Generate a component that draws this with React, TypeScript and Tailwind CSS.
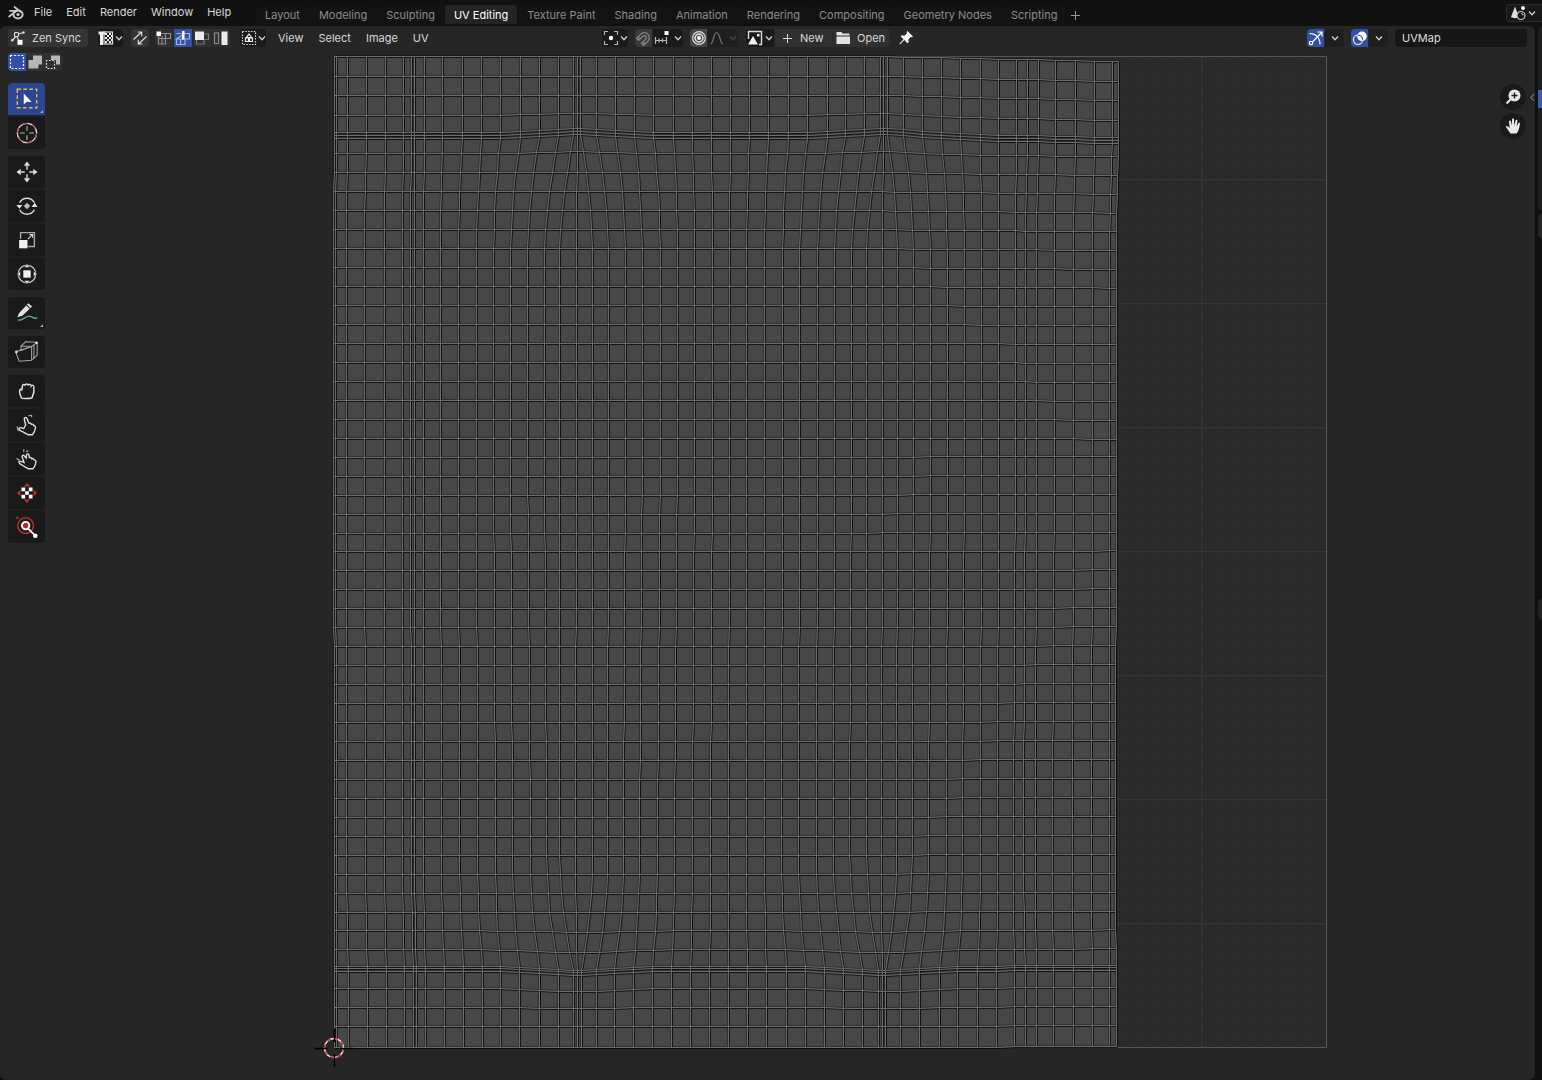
import React from "react";

/* ---------- UV mesh geometry ---------- */

// One entry per vertical edge loop: x at the top strip, upper body, lower body, bottom strip.
const COLUMNS: number[][] = [
  [335, 334, 335, 335], [337, 336, 337, 337], [348, 347, 347, 349], [367, 365, 366, 368], [386, 385, 385, 387],
  [404, 403, 403, 405], [412, 411, 412, 414], [415, 415, 415, 417], [425, 424, 424, 426], [443, 441, 442, 445],
  [463, 459, 460, 464], [482, 477, 478, 483], [501, 494, 496, 501], [521, 511, 513, 520], [540, 528, 531, 540],
  [559, 545, 547, 559], [574, 560, 560, 574], [578, 577, 576, 578], [581, 593, 593, 582], [597, 609, 608, 597],
  [616, 626, 624, 615], [635, 643, 640, 634], [654, 661, 658, 653], [674, 678, 675, 672], [693, 695, 693, 691],
  [712, 713, 711, 710], [731, 730, 729, 729], [750, 747, 747, 748], [769, 765, 765, 767], [789, 783, 782, 787],
  [808, 800, 799, 806], [828, 818, 817, 825], [846, 835, 834, 844], [865, 852, 850, 863], [881, 867, 867, 879],
  [884, 883, 882, 883], [888, 898, 897, 886], [904, 914, 913, 901], [923, 931, 929, 920], [942, 948, 947, 940],
  [961, 965, 963, 958], [981, 982, 981, 978], [999, 999, 998, 997], [1017, 1016, 1014, 1015], [1028, 1026, 1024, 1026],
  [1039, 1037, 1036, 1037], [1056, 1055, 1053, 1054], [1076, 1074, 1073, 1074], [1095, 1093, 1092, 1093],
  [1113, 1110, 1110, 1110], [1119, 1117, 1116, 1117],
];

const BODY_ROWS = Array.from({ length: 43 }, (_, i) => 154.500 + i * 18.95);
const ROWS = [57, 77, 96, 116, 133, 136, 139, ...BODY_ROWS, 967, 969, 972, 989, 1008, 1027, 1048];

const mix = (a: number, b: number, t: number) => a + (b - a) * Math.max(0, Math.min(1, t));
const ease = (t: number) => {
  const c = Math.max(0, Math.min(1, t));
  return 1 - Math.pow(1 - c, 2.2);
};

function columnX(c: number[], y: number) {
  if (y <= 139) return c[0];
  if (y >= 966) return c[3];
  if (y < 290) return mix(c[0], c[1], ease((y - 139) / 140));
  if (y > 830) return mix(c[3], c[2], ease((966 - y) / 120));
  return mix(c[1], c[2], (y - 450) / 380);
}

function rowY(y: number, x: number) {
  const near = Math.exp(-Math.pow((x - 578) / 50, 2)) + Math.exp(-Math.pow((x - 884) / 50, 2));
  const up = y < 60 ? 0 : 4 * Math.exp(-Math.pow((y - 136) / 26, 2));
  const down = y > 1040 ? 0 : 4 * Math.exp(-Math.pow((y - 969) / 36, 2));
  const slope = (x - 880) / 235;
  const tilt = y < 450 ? mix(0, y < 145 ? 5 : 3, slope) * mix(1, 0.3, (y - 140) / 200) : mix(0, -1, slope);
  return y + near * (down - up) + tilt;
}

const snap = (n: number) => Math.round(n) - 0.5;
const point = (c: number[], y: number) => snap(columnX(c, y)) + " " + snap(rowY(y, columnX(c, y)));
const MESH_PATH = [
  ...COLUMNS.map((c) => "M" + ROWS.map((y) => point(c, y)).join("L")),
  ...ROWS.map((y) => "M" + COLUMNS.map((c) => point(c, y)).join("L")),
].join("");
const FIRST = COLUMNS[0];
const LAST = COLUMNS[COLUMNS.length - 1];
const TOP_EDGE = COLUMNS.map((c) => point(c, 57)).join("L");
const FILL_PATH =
  "M" + TOP_EDGE + "L" + ROWS.map((y) => point(LAST, y)).join("L") + "L" +
  [...ROWS].reverse().map((y) => point(FIRST, y)).join("L") + "Z";

function UvCanvas() {
  const minor = Array.from({ length: 63 }, (_, i) => i + 1);
  const major = [1, 2, 3, 4, 5, 6, 7];
  return (
    <svg className="absolute inset-0 h-full w-full" aria-label="UV layout">
      <g transform="translate(0 -26)">
        <rect x="334" y="56" width="992" height="992" fill="#2a2a2a" />
        <g stroke="#2d2d2d">
          {minor.map((i) => (
            <path key={i} d={`M${334 + Math.round(i * 15.5)}.5 56V1048M334 ${56 + Math.round(i * 15.5)}.5H1326`} />
          ))}
        </g>
        <g stroke="#363636">
          {major.map((i) => (
            <path key={i} d={`M${333 + i * 124}.5 56V1048M334 ${55 + i * 124}.5H1326`} />
          ))}
        </g>
        <rect x="334.5" y="56.5" width="992" height="991" fill="none" stroke="#565656" />
        <path d={FILL_PATH} fill="#474747" />
        <path d={MESH_PATH} fill="none" stroke="#000" strokeOpacity=".3" strokeWidth="3" />
        <path d={MESH_PATH} fill="none" stroke="#000" strokeOpacity=".6" strokeWidth="1" transform="translate(1 1)" />
        <path d={MESH_PATH} fill="none" stroke="#6c6c6c" strokeWidth="1" />
        <circle cx="334" cy="1048" r="9.5" fill="none" stroke="#f4f4f4" strokeWidth="1.4" />
        <circle cx="334" cy="1048" r="9.5" fill="none" stroke="#e8202c" strokeWidth="1.4" strokeDasharray="3.73" />
        <path d="M314.500 1048.500h13M340 1048.500h13M334.500 1029v13M334.500 1054v13" stroke="#000" strokeWidth="1.3" />
      </g>
    </svg>
  );
}

/* ---------- Icons ---------- */

type IconProps = { children: React.ReactNode; w?: string; box?: string };
const Icon = ({ children, w = "h-4 w-4", box = "0 0 16 16" }: IconProps) => (
  <svg viewBox={box} className={`${w} shrink-0`} fill="none" stroke="#dcdcdc" strokeWidth="1.2" aria-hidden="true">
    {children}
  </svg>
);
const Chevron = ({ dim = false }: { dim?: boolean }) => (
  <svg viewBox="0 0 8 8" className="h-2 w-2 shrink-0" fill="none" stroke={dim ? "#444" : "#cfcfcf"} strokeWidth="1.3" aria-hidden="true">
    <path d="M1 2.500 4 5.700 7 2.500" />
  </svg>
);

const BlenderLogo = () => (
  <Icon>
    <path d="M1.200 11.500 8 6.200M2 5.800h7M6.500 2 13 7" stroke="#c8c8c8" strokeWidth="1.800" strokeLinecap="round" />
    <ellipse cx="10" cy="9.500" rx="4.600" ry="4" stroke="#c8c8c8" strokeWidth="2" />
    <circle cx="10" cy="9.500" r="1.600" fill="#c8c8c8" stroke="none" />
  </Icon>
);
const ZenSyncIcon = () => (
  <Icon>
    <path d="M2 10.500 5.500 7M8.500 4 13.500 2.500M6.700 6.500 8.500 10" />
    <rect x="4.500" y="2.500" width="4" height="4" rx="1" />
    <rect x="7.500" y="9.800" width="5" height="5" fill="#fff" stroke="none" />
    <circle cx="2.300" cy="10.300" r="1.300" fill="#dcdcdc" stroke="none" />
    <circle cx="13.500" cy="2.500" r="1.200" fill="#dcdcdc" stroke="none" />
  </Icon>
);
const CheckerIcon = () => (
  <Icon>
    <path d="M0.500 1.500h6.500v3H5v10.500H2V4.500H.5z" fill="#f0f0f0" stroke="none" />
    <rect x="6" y="2" width="8.500" height="12" stroke="#ddd" />
    <path d="M7 3h2v2H7zM11 3h2v2h-2zM9 5h2v2H9zM13 5h1v2h-1zM7 7h2v2H7zM11 7h2v2h-2zM9 9h2v2H9zM13 9h1v2h-1zM7 11h2v2H7zM11 11h2v2h-2z" fill="#f0f0f0" stroke="none" />
  </Icon>
);
const SyncIcon = () => (
  <Icon>
    <path d="M1.500 9.500 9.500 2M5.500 2h4.200v4.200M14.500 6.500 6.500 14M10.500 14H6.300V9.800" />
  </Icon>
);
const VertIcon = () => (
  <Icon>
    <path d="M5 3.500h9.500v5H2.500V5M2.500 8.500v5.500h7V3.500M6 6v8" stroke="#8c8c8c" />
    <rect x="0.500" y="1.500" width="4.500" height="4.500" fill="#fff" stroke="none" />
  </Icon>
);
const EdgeIcon = () => (
  <Icon>
    <path d="M1.500 3.500h5M9.500 3.500h5v5.500h-13zM1.500 9v5.500h8.500V9M5.500 9v5.500" stroke="#9fb4ea" />
    <rect x="7" y="1" width="2.500" height="8.500" fill="#fff" stroke="none" />
  </Icon>
);
const FaceIcon = () => (
  <Icon>
    <path d="M10 4h4.500v5.500H2.500V14H10V9.500" stroke="#777" />
    <rect x="1" y="1.500" width="9" height="8.500" fill="#ececec" stroke="none" />
  </Icon>
);
const IslandIcon = () => (
  <Icon>
    <rect x="1.500" y="3" width="4" height="10.500" stroke="#888" />
    <rect x="8.500" y="1.500" width="6" height="13.500" fill="#ececec" stroke="none" />
  </Icon>
);
const StickyIcon = () => (
  <Icon>
    <rect x="1.500" y="1.500" width="13" height="13" strokeDasharray="1.500 1.300" />
    <path d="M8 4 10.500 7.500H5.500zM4.500 8h3v3.500h-3zM8.500 8h3v3.500h-3z" stroke="#eee" />
  </Icon>
);
const PivotIcon = () => (
  <Icon>
    <path d="M1.500 5V1.500H5M11 1.500h3.500V5M14.500 11v3.500H11M5 14.500H1.500V11" stroke="#b4b4b4" />
    <circle cx="8" cy="8" r="2.200" fill="#fff" stroke="none" />
  </Icon>
);
const MagnetIcon = () => (
  <Icon>
    <g transform="rotate(45 8 8)" stroke="#8a8a8a">
      <path d="M3 13.500V7.500a5 5 0 0 1 10 0v6H10V7.500a2 2 0 0 0-4 0v6zM3 11.500h3M10 11.500h3" />
    </g>
  </Icon>
);
const IncrementIcon = () => (
  <Icon>
    <path d="M1.500 7v7M5 8.500v4M8.500 8.500v4M12.500 7v7M1.500 10.500h11" stroke="#b8b8b8" />
    <rect x="10.500" y="1" width="4" height="4" fill="#fff" stroke="none" />
  </Icon>
);
const ProportionalIcon = () => (
  <Icon>
    <circle cx="8" cy="8" r="6.300" />
    <circle cx="8" cy="8" r="3.900" strokeWidth="1.600" />
    <circle cx="8" cy="8" r="2" fill="#fff" stroke="none" />
  </Icon>
);
const FalloffIcon = () => (
  <Icon>
    <path d="M1.500 14c3 0 3-11.500 6.200-11.500S11 14 14 14" stroke="#777" />
  </Icon>
);
const ImageIcon = () => (
  <Icon>
    <path d="M1.500 9V1.500h13v13H12" strokeWidth="1.400" />
    <path d="M1 14.500 6 6l5 8.500zM10 4h2.500v2.500H10z" fill="#eee" stroke="none" />
  </Icon>
);
const PlusIcon = ({ dim = false }: { dim?: boolean }) => (
  <svg viewBox="0 0 10 10" className="h-[10px] w-[10px] shrink-0" stroke={dim ? "#999" : "#ddd"} aria-hidden="true">
    <path d="M5.500 1v9M1 5.500h9" />
  </svg>
);
const FolderIcon = () => (
  <Icon>
    <path d="M1.500 2h5l1 1.500h7V5.500h-13zM1.500 6.500h13.500V14H1.500z" fill="#e2e2e2" stroke="none" />
  </Icon>
);
const PinIcon = () => (
  <Icon>
    <path d="M9.500 1 15 6.500l-1 .8-1.300-.3-2.400 2.500.4 2.700-1.200 1L6.300 10 2 14.500 1.300 14l4.200-4.800L2.700 6.500l1-1.200 2.800.4L9 3.300l-.4-1.400z" fill="#fff" stroke="none" />
  </Icon>
);
const GizmoIcon = () => (
  <Icon>
    <path d="M1.500 3.500C8 3.500 12 7.500 12 14.500" stroke="#fff" />
    <path d="M4.500 12 13.500 2.500M9.500 2h4.500v4.500" stroke="#fff" />
    <circle cx="3" cy="13" r="1.700" stroke="#fff" />
  </Icon>
);
const OverlayIcon = () => (
  <Icon>
    <circle cx="10" cy="6.300" r="4.800" fill="#fff" stroke="none" />
    <circle cx="6" cy="9.800" r="4.600" stroke="#dfe6ff" />
    <path d="M6 5.200a4.600 4.600 0 0 1 4.600 4.600" stroke="#3350a2" />
  </Icon>
);
const SceneIcon = () => (
  <Icon>
    <path d="M5 1.500 9 12c-2 1.500-6 1.500-8 0z" fill="#ddd" stroke="none" />
    <circle cx="11" cy="10.500" r="4" fill="#161616" stroke="#c8c8c8" />
    <path d="M11 8.500a2 2 0 0 1 2 2" stroke="#bbb" />
    <circle cx="13" cy="3" r="2" fill="#fff" stroke="none" />
  </Icon>
);

/* ---------- Toolbar icons (26px box) ---------- */

const BoxSelectTool = () => (
  <>
    <rect x="2.500" y="2.500" width="21" height="20" stroke="#e5b95c" strokeWidth="1.500" strokeDasharray="4 2.500" />
    <path d="M9.500 7v12l3.300-3 5.200.3z" fill="#fff" stroke="none" />
  </>
);
const CursorTool = () => (
  <>
    <circle cx="13" cy="13" r="10.500" stroke="#e4dede" strokeWidth="1.400" />
    <circle cx="13" cy="13" r="10.500" stroke="#a84a50" strokeWidth="1.400" strokeDasharray="5.500" />
    <path d="M13 5.500v5M13 15.500v5M5.500 13h5M15.500 13h5" stroke="#bbb" />
  </>
);
const ARROWS = "M13 2l3 4h-6zM13 24l3-4h-6zM2 13l4-3v6zM24 13l-4-3v6z";
const MoveTool = () => (
  <>
    <path d={ARROWS} fill="#e4e4e4" stroke="#e4e4e4" strokeWidth=".5" />
    <path d="M13 6v4.500M13 15.500V20M6 13h4.500M15.500 13H20" strokeWidth="1.500" />
  </>
);
const RotateTool = () => (
  <>
    <path d="M5 9.500A9 9 0 0 1 21 9.500M5 17A9 9 0 0 0 21 17" strokeWidth="1.500" />
    <path d="M1.500 12h6.500l-3.200 4zM18 14h6.500l-3.200-4.500z" fill="#e4e4e4" stroke="none" />
    <path d="M13 9.500 16.500 13 13 16.500 9.500 13z" fill="#bdbdbd" stroke="none" />
  </>
);
const ScaleTool = () => (
  <>
    <path d="M6 12V5h15v15h-7" stroke="#aaa" strokeWidth="1.500" />
    <path d="M14 12l4.500-4.500M15.500 7H19v3.500" />
    <rect x="4.500" y="13" width="9" height="9" fill="#f0f0f0" stroke="none" />
  </>
);
const TransformTool = () => (
  <>
    <circle cx="13" cy="13" r="9.500" stroke="#bbb" strokeWidth="1.500" />
    <path d={ARROWS} fill="#e8e8e8" stroke="#1b1b1b" strokeWidth=".6" />
    <rect x="9" y="9" width="8" height="8" fill="#f0f0f0" stroke="none" />
  </>
);
const AnnotateTool = () => (
  <>
    <path d="M2.500 17.500 4.500 13 14.500 2.500l4 3.500L8 16z" fill="#e0e0e0" stroke="none" />
    <path d="M12.500 4.500 16.500 8" stroke="#1b1b1b" />
    <path d="M3 20.500c5 1.500 7-3.500 12-4 4-.3 5 4 9 1.500" stroke="#62b088" strokeWidth="1.400" />
  </>
);
const RipTool = () => (
  <>
    <path d="M6.500 10.500V6.500l5-4.500 12.500.5v14l-6 5.500-13.500 1L.8 13zM6.500 6.500l11.500.5 6-4.500M18 7v15M6.500 11.500l11.500-4.500M.8 13 20 6M20.500 5v15" stroke="#a4a4a4" strokeWidth="1.100" />
    <circle cx="1.500" cy="13" r="1.500" fill="#c9d0ff" stroke="none" />
    <circle cx="23.500" cy="3" r="1.200" fill="#fff" stroke="none" />
  </>
);
const GrabTool = () => (
  <path d="M7 20.500c-1-3-2.500-5-2-8 .3-2 2-1.500 2.500 0L8 7.500c.3-2 2.500-2 2.800-.3.500-2.500 3.200-2.500 3.500-.2.700-1.800 3-1.500 3.200.5.800-1.300 2.800-.8 3 1.200.5 5-.5 8.300-2 11.500-1 1-10.500 1.300-11.500.3z" strokeWidth="1.600" />
);
const RelaxTool = () => (
  <>
    <path d="M14 23.500 7.500 20c-2-1.200-4-2-3.300-3.500.7-1.300 2.500-.7 5.300.3L11.500 13 10 6.500c-.2-2 2.400-2.300 3-.4l2 4.900c1.500-.6 2.400 0 2.700 1.200 1.400-.5 2.300.2 2.500 1.300 1.400 0 2.200 1 2 2.500-.5 3-1.200 5-3.200 7.500z" strokeWidth="1.500" />
    <path d="M14.500 3.500c1-1 2-1 3.500-1v2M2.500 14.500c-.5 2 0 3.500 1.500 5" stroke="#aaa" />
  </>
);
const PinchTool = () => (
  <>
    <path d="M14 23.500 7.500 19.500c-2-1.200-3.500-2-3-3.300.7-1.300 2.500-.7 5.300.5l-2-5.700c-.7-2 1.600-2.700 2.600-1l1.600 2 .5-3.500c.5-1.600 2.500-1.300 2.600.3l.4 2.700c1.500-.6 2.400 0 2.700 1.200 1.400-.5 2.300.2 2.500 1.300 1.400 0 2.200 1 2 2.500-.5 3-1.200 5-3.200 7z" strokeWidth="1.500" />
    <path d="M9.500 2.500v3M12 5l2.500-1M1.500 12.500l3 1.500-.5 3" stroke="#aaa" />
  </>
);
const ZenMoveTool = () => (
  <>
    <path d="M13 2l3.500 4h-7zM13 24l3.500-4h-7zM2 13l4-3.500v7zM24 13l-4-3.500v7z" fill="#b52c2e" stroke="none" />
    <path d="M7 7h4v4H7zM15 7h4v4h-4zM11 11h4v4h-4zM7 15h4v4H7zM15 15h4v4h-4z" fill="#fff" stroke="none" />
  </>
);
const ZenPickTool = () => (
  <>
    <circle cx="11.500" cy="11.500" r="8.500" stroke="#b52c2e" strokeWidth="1.700" />
    <circle cx="11.500" cy="11.500" r="4" fill="#b52c2e" stroke="#fff" strokeWidth="2" />
    <circle cx="2.500" cy="3" r="1.300" fill="#b52c2e" stroke="none" />
    <path d="M14 14.500 22 22.500" stroke="#fff" strokeWidth="1.800" />
    <circle cx="22" cy="22.500" r="2.500" fill="#fff" stroke="none" />
  </>
);

const TOOL_GROUPS: { label: string; Draw: () => React.ReactElement; active?: boolean; more?: boolean }[][] = [
  [{ label: "Select Box", Draw: BoxSelectTool, active: true, more: true }, { label: "Cursor", Draw: CursorTool }],
  [
    { label: "Move", Draw: MoveTool },
    { label: "Rotate", Draw: RotateTool },
    { label: "Scale", Draw: ScaleTool },
    { label: "Transform", Draw: TransformTool },
  ],
  [{ label: "Annotate", Draw: AnnotateTool, more: true }],
  [{ label: "Rip Region", Draw: RipTool }],
  [
    { label: "Grab", Draw: GrabTool },
    { label: "Relax", Draw: RelaxTool },
    { label: "Pinch", Draw: PinchTool },
    { label: "Zen Transform", Draw: ZenMoveTool },
    { label: "Zen Select", Draw: ZenPickTool },
  ],
];

function Toolbar() {
  return (
    <nav aria-label="Tools" className="flex w-[37px] flex-col gap-[7px]">
      {TOOL_GROUPS.map((group, i) => (
        <div key={i} className="flex flex-col gap-0.5 overflow-hidden rounded bg-[#202020]">
          {group.map(({ label, Draw, active, more }) => (
            <button key={label} aria-label={label} className={`relative flex h-8 items-center justify-center ${active ? "bg-[#2c4694]" : "bg-[#1a1a1a]"}`}>
              <Icon w="h-6 w-6" box="0 0 26 26"><Draw /></Icon>
              {more && <span className="absolute right-0.5 bottom-0.5 h-[3px] w-[3px] bg-[#aaa] [clip-path:polygon(100%_0,100%_100%,0_100%)]" />}
            </button>
          ))}
        </div>
      ))}
    </nav>
  );
}

/* ---------- Header pieces ---------- */

type BtnProps = { label: string; className: string; children: React.ReactNode };
const Btn = ({ label, className, children }: BtnProps) => (
  <button aria-label={label} className={`flex h-[18px] shrink-0 items-center ${className}`}>{children}</button>
);

const MENUS = ["File", "Edit", "Render", "Window", "Help"];
const TABS = ["Layout", "Modeling", "Sculpting", "UV Editing", "Texture Paint", "Shading", "Animation", "Rendering", "Compositing", "Geometry Nodes", "Scripting"];

function TopBar() {
  return (
    <header className="flex h-[26px] shrink-0 items-center bg-[#111111]">
      <button aria-label="Blender" className="ml-2 flex h-5 w-4 items-center"><BlenderLogo /></button>
      <div className="flex w-[232px] items-center pb-0.5 pl-[5px]">
        {MENUS.map((m) => (
          <button key={m} className="h-5 pr-[9px] pl-[5px] text-[11px] leading-4 text-[#d8d8d8]">{m}</button>
        ))}
      </div>
      <div className="flex flex-1 items-end gap-px self-end pb-0.5">
        {TABS.map((t) => (
          <button key={t} className={`h-[19px] rounded-t px-[9px] text-[11px] leading-[21px] whitespace-nowrap ${t === "UV Editing" ? "bg-[#242424] text-white" : "bg-[#131313] text-[#8c8c8c]"}`}>{t}</button>
        ))}
        <button aria-label="Add Workspace" className="flex h-[19px] w-4 items-center justify-center"><PlusIcon dim /></button>
      </div>
      <Btn label="Scene" className="h-5 w-9 gap-0.5 rounded-l border border-r-0 border-[#2c2c2c] bg-[#181818] pl-[3px]"><SceneIcon /><Chevron /></Btn>
    </header>
  );
}

function EditorHeader() {
  return (
    <div className="flex h-6 items-center justify-between px-2 text-[11px] text-[#d8d8d8]">
      <div className="flex w-[594px] shrink-0 items-center">
        <button className="flex h-[18px] w-20 items-center gap-1.5 rounded bg-[#343434] pl-0.5 whitespace-nowrap"><ZenSyncIcon />Zen Sync</button>
        <Btn label="Texture display" className="ml-2.5 w-[25px] justify-center gap-px rounded bg-[#1a1a1a]"><CheckerIcon /><Chevron /></Btn>
        <Btn label="UV sync selection" className="ml-2 w-[18px] justify-center rounded bg-[#343434]"><SyncIcon /></Btn>
        <div className="ml-1.5 flex gap-px overflow-hidden rounded">
          <Btn label="Vertex" className="w-[18px] justify-center bg-[#303030]"><VertIcon /></Btn>
          <Btn label="Edge" className="w-[18px] justify-center bg-[#3350a2]"><EdgeIcon /></Btn>
          <Btn label="Face" className="w-[18px] justify-center bg-[#303030]"><FaceIcon /></Btn>
          <Btn label="Island" className="w-[18px] justify-center bg-[#303030]"><IslandIcon /></Btn>
        </div>
        <Btn label="Sticky selection" className="ml-2.5 w-[26px] justify-center gap-px rounded bg-[#1a1a1a]"><StickyIcon /><Chevron /></Btn>
        <div className="ml-3 flex gap-[15px]">
          {["View", "Select", "Image", "UV"].map((m) => <button key={m}>{m}</button>)}
        </div>
      </div>
      <div className="flex flex-1 items-center">
        <Btn label="Pivot" className="w-[26px] justify-center gap-px rounded bg-[#1a1a1a]"><PivotIcon /><Chevron /></Btn>
        <div className="ml-[7px] flex gap-px overflow-hidden rounded">
          <Btn label="Snap" className="w-[17px] justify-center bg-[#3a3a3a]"><MagnetIcon /></Btn>
          <Btn label="Snapping" className="w-[30px] justify-center gap-1 bg-[#1a1a1a]"><IncrementIcon /><Chevron /></Btn>
        </div>
        <div className="ml-[7px] flex gap-px overflow-hidden rounded">
          <Btn label="Proportional editing" className="w-[17px] justify-center bg-[#464646]"><ProportionalIcon /></Btn>
          <Btn label="Falloff" className="w-[30px] justify-center gap-1 bg-[#1f1f1f]"><FalloffIcon /><Chevron dim /></Btn>
        </div>
        <div className="ml-2 flex gap-px overflow-hidden rounded">
          <Btn label="Browse image" className="w-7 justify-center gap-0.5 bg-[#1a1a1a]"><ImageIcon /><Chevron /></Btn>
          <button className="flex h-[18px] w-[57px] items-center gap-2 bg-[#303030] pl-[7px]"><PlusIcon />New</button>
          <button className="flex h-[18px] w-[57px] items-center gap-1.5 bg-[#303030] pl-0.5"><FolderIcon />Open</button>
        </div>
        <Btn label="Pin" className="ml-2 w-4"><PinIcon /></Btn>
      </div>
      <div className="flex items-center">
        <Btn label="Gizmos" className="w-[17px] justify-center rounded-l bg-[#3350a2]"><GizmoIcon /></Btn>
        <Btn label="Gizmo options" className="ml-px w-[19px] justify-center rounded-r bg-[#1f1f1f]"><Chevron /></Btn>
        <Btn label="Overlays" className="ml-[7px] w-[17px] justify-center rounded-l bg-[#3350a2]"><OverlayIcon /></Btn>
        <Btn label="Overlay options" className="ml-px w-[19px] justify-center rounded-r bg-[#1f1f1f]"><Chevron /></Btn>
        <input aria-label="UV map" defaultValue="UVMap" className="ml-[7px] h-[18px] w-[132px] rounded bg-[#161616] px-[7px] text-[11px] text-[#dedede] outline-none" />
      </div>
    </div>
  );
}

function SelectModes() {
  return (
    <div className="flex w-max overflow-hidden rounded">
      <Btn label="Set selection" className="w-[18px] justify-center bg-[#3350a2]">
        <Icon><rect x="1.500" y="1.500" width="13" height="13" stroke="#fff" strokeDasharray="2 1.600" /></Icon>
      </Btn>
      <Btn label="Extend selection" className="w-[18px] justify-center bg-[#303030]">
        <Icon><path d="M6 1.500h9v9h-3.500v4H1.500V6H6z" fill="#b6b6b6" stroke="none" /></Icon>
      </Btn>
      <Btn label="Subtract selection" className="w-[18px] justify-center bg-[#303030]">
        <Icon>
          <path d="M6 1.500h9v9h-4V6H6z" fill="#b6b6b6" stroke="none" />
          <path d="M9 6.500H1.500v8h8v-7" strokeDasharray="1.800 1.500" />
        </Icon>
      </Btn>
    </div>
  );
}

export default function App() {
  return (
    <div className="flex h-screen flex-col overflow-hidden bg-[#111111] font-[Inter,sans-serif] select-none">
      <TopBar />
      <div className="flex min-h-0 flex-1 gap-[3px]">
        <main className="relative min-w-0 flex-1 overflow-hidden rounded-md bg-[#262626]">
          <UvCanvas />
          <div className="relative">
            <EditorHeader />
            <div className="flex items-start justify-between pl-2">
              <div className="flex flex-col gap-3 pt-[3px]">
                <SelectModes />
                <Toolbar />
              </div>
              <div className="flex items-start pt-[34px]">
                <div className="flex flex-col gap-[3px]">
                  <button aria-label="Zoom" className="flex h-[26px] w-[26px] items-center justify-center rounded-full bg-[#1a1a1a]">
                    <Icon>
                      <circle cx="9.500" cy="6.500" r="6" fill="#e6e6e6" stroke="none" />
                      <path d="M5.500 10.500 1.500 14.500" strokeWidth="2.200" stroke="#e6e6e6" />
                      <path d="M9.500 3.500v6M6.500 6.500h6" stroke="#1a1a1a" strokeWidth="1.400" />
                    </Icon>
                  </button>
                  <button aria-label="Pan" className="flex h-[26px] w-[26px] items-center justify-center rounded-full bg-[#1a1a1a]">
                    <Icon>
                      <path d="M5.500 15.500C4 13 1.500 10.500.8 8.500c.8-1.200 2-.4 3.900 1.500L4 3.500c0-1.300 1.700-1.400 2 0L7 8V1.500c0-1.400 1.900-1.400 2 0L9.200 8l1.300-5.500c.4-1.200 2-.9 1.900.4L11.700 8.500l1.600-3.300c.6-1 2-.4 1.700.8-.8 3-1 7-3.500 9.500z" fill="#eaeaea" stroke="none" />
                    </Icon>
                  </button>
                </div>
                <button aria-label="Show sidebar" className="flex h-[26px] w-[9px] items-center justify-center pl-1 text-[#bbb]">
                  <svg viewBox="0 0 6 10" className="h-[9px] w-[5px] shrink-0" fill="none" stroke="currentColor" aria-hidden="true"><path d="M5 1 1 5l4 4" /></svg>
                </button>
              </div>
            </div>
          </div>
        </main>
        <aside className="flex w-1 shrink-0 flex-col gap-1 overflow-hidden">
          <div className="h-[184px] rounded-l bg-[#1d1d1d] pt-16"><div className="h-[18px] bg-[#3c5cb0]" /></div>
          <div className="h-6 rounded-l bg-[#262626]" />
          <div className="flex-1 pt-[357px]"><div className="h-5 rounded-l bg-[#222222]" /></div>
        </aside>
      </div>
    </div>
  );
}
